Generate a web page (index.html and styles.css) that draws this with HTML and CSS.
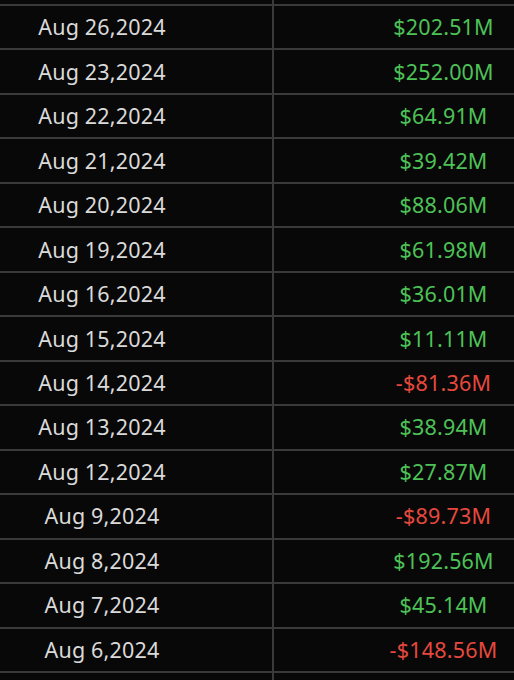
FILE: index.html
```html
<!DOCTYPE html>
<html>
<head>
<meta charset="utf-8">
<link rel="stylesheet" href="styles.css">
</head>
<body>
<div class="table">
  <div class="row edge-top"><div class="cell"></div><div class="cell"></div></div>
  <div class="row"><div class="cell date">Aug 26,2024</div><div class="cell val pos">$202.51M</div></div>
  <div class="row"><div class="cell date">Aug 23,2024</div><div class="cell val pos">$252.00M</div></div>
  <div class="row"><div class="cell date">Aug 22,2024</div><div class="cell val pos">$64.91M</div></div>
  <div class="row"><div class="cell date">Aug 21,2024</div><div class="cell val pos">$39.42M</div></div>
  <div class="row"><div class="cell date">Aug 20,2024</div><div class="cell val pos">$88.06M</div></div>
  <div class="row"><div class="cell date">Aug 19,2024</div><div class="cell val pos">$61.98M</div></div>
  <div class="row"><div class="cell date">Aug 16,2024</div><div class="cell val pos">$36.01M</div></div>
  <div class="row"><div class="cell date">Aug 15,2024</div><div class="cell val pos">$11.11M</div></div>
  <div class="row"><div class="cell date">Aug 14,2024</div><div class="cell val neg">-$81.36M</div></div>
  <div class="row"><div class="cell date">Aug 13,2024</div><div class="cell val pos">$38.94M</div></div>
  <div class="row"><div class="cell date">Aug 12,2024</div><div class="cell val pos">$27.87M</div></div>
  <div class="row"><div class="cell date">Aug 9,2024</div><div class="cell val neg">-$89.73M</div></div>
  <div class="row"><div class="cell date">Aug 8,2024</div><div class="cell val pos">$192.56M</div></div>
  <div class="row"><div class="cell date">Aug 7,2024</div><div class="cell val pos">$45.14M</div></div>
  <div class="row"><div class="cell date">Aug 6,2024</div><div class="cell val neg">-$148.56M</div></div>
  <div class="row edge-bottom"><div class="cell"></div><div class="cell"></div></div>
</div>
</body>
</html>
```
FILE: styles.css
```css
html, body {
  margin: 0;
  padding: 0;
  background: #080808;
  overflow: hidden;
  height: 680px;
}
.table {
  width: 514px;
  display: flex;
  flex-direction: column;
  font-family: "Noto Sans", sans-serif;
  font-size: 21.5px;
  letter-spacing: 0.2px;
}
.row {
  display: flex;
  height: 44.47px;
  box-sizing: border-box;
  border-top: 2px solid #3a3a3a;
}
.row.edge-top {
  height: 4px;
  border-top: none;
}
.row.edge-bottom {
  height: 12px;
}
.cell {
  display: flex;
  align-items: center;
  justify-content: center;
  box-sizing: border-box;
  white-space: nowrap;
  padding-bottom: 1px;
}
.cell:first-child {
  width: 274px;
  padding-right: 68px;
  border-right: 2px solid #3a3a3a;
}
.cell:last-child {
  flex: 1;
  padding-left: 99px;
}
.date {
  color: #dadada;
}
.pos {
  color: #4dc257;
}
.neg {
  color: #e6483e;
}
```
